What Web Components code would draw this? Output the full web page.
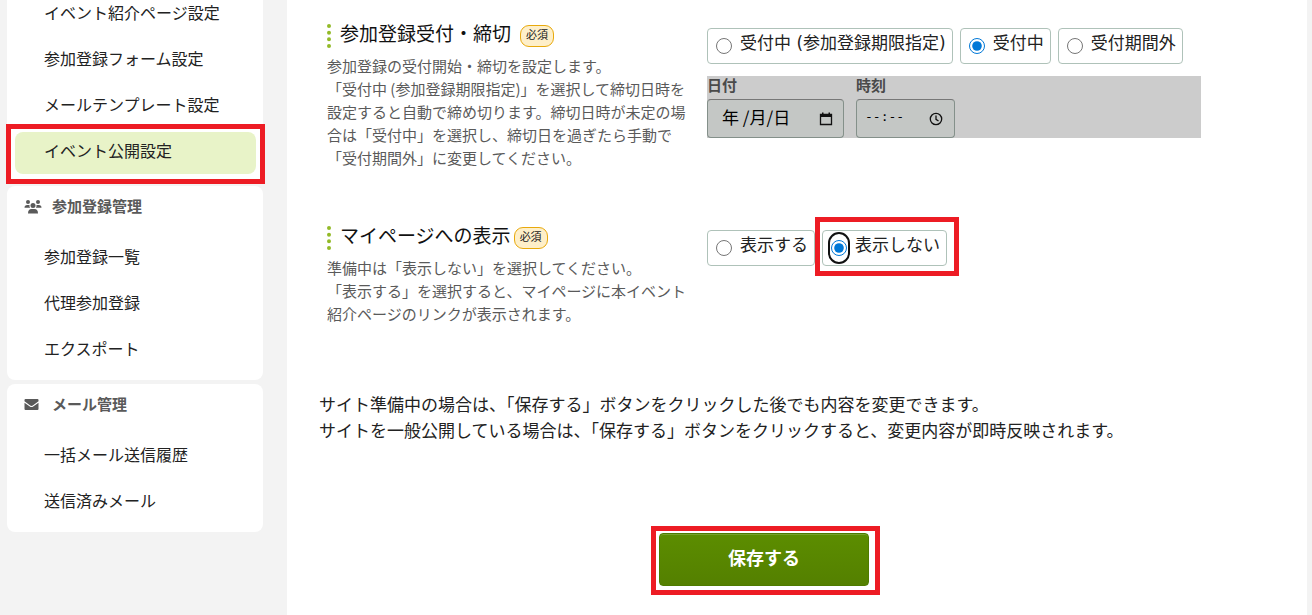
<!DOCTYPE html>
<html lang="ja">
<head>
<meta charset="utf-8">
<meta name="viewport" content="width=device-width, initial-scale=1">
<title>イベント公開設定</title>
<style>
body { margin: 0; background: #f3f3f3; color: #222; font-family: "Noto Sans CJK JP", sans-serif; font-size: 17px; }
</style>
</head>
<body>
<app-shell>
  <nav-card slot="nav" continued>
    <nav-item>イベント紹介ページ設定</nav-item>
    <nav-item>参加登録フォーム設定</nav-item>
    <nav-item>メールテンプレート設定</nav-item>
    <nav-item active>イベント公開設定</nav-item>
  </nav-card>
  <nav-card slot="nav" heading="参加登録管理">
    <svg slot="icon" width="18" height="16" viewBox="0 0 18 16" fill="#5a5a5a" aria-hidden="true">
      <circle cx="4" cy="3" r="2"/><circle cx="14" cy="3" r="2"/><circle cx="9" cy="6.500" r="2.500"/>
      <path d="M.5 8.800Q.5 6 3.200 6H5.500Q5.200 8 6.200 8.800ZM17.500 8.800Q17.500 6 14.800 6H12.500Q12.800 8 11.800 8.800ZM4 14.500Q4 10 7.500 10H10.500Q14 10 14 14.500Z"/>
    </svg>
    <nav-item>参加登録一覧</nav-item>
    <nav-item>代理参加登録</nav-item>
    <nav-item>エクスポート</nav-item>
  </nav-card>
  <nav-card slot="nav" heading="メール管理">
    <svg slot="icon" width="18" height="16" viewBox="0 0 18 16" fill="#5a5a5a" aria-hidden="true">
      <path d="M1.500 2H13.500Q14.500 2 14.500 3V4.300L8.800 8.500Q7.500 9.300 6.200 8.500L.5 4.300V3Q.5 2 1.500 2ZM.5 5.700L5.800 9.500Q7.500 10.600 9.200 9.500L14.500 5.700V12Q14.500 13 13.500 13H1.500Q.5 13 .5 12Z"/>
    </svg>
    <nav-item>一括メール送信履歴</nav-item>
    <nav-item>送信済みメール</nav-item>
  </nav-card>

  <setting-row>
    <span slot="title">参加登録受付・締切&nbsp;</span>
    <span slot="help">参加登録の受付開始・締切を設定します。<br>「受付中 (参加登録期限指定)」を選択して締切日時を<br>設定すると自動で締め切ります。締切日時が未定の場<br>合は「受付中」を選択し、締切日を過ぎたら手動で<br>「受付期間外」に変更してください。</span>
    <radio-group name="reception" label="参加登録受付・締切" options="受付中 (参加登録期限指定)|受付中|受付期間外" selected="1"></radio-group>
    <deadline-fields></deadline-fields>
  </setting-row>
  <setting-row>
    <span slot="title">マイページへの表示</span>
    <span slot="help">準備中は「表示しない」を選択してください。<br>「表示する」を選択すると、マイページに本イベント<br>紹介ページのリンクが表示されます。</span>
    <radio-group name="visible" label="マイページへの表示" options="表示する|表示しない" selected="1" marked></radio-group>
  </setting-row>
  <save-panel>サイト準備中の場合は、「保存する」ボタンをクリックした後でも内容を変更できます。<br>サイトを一般公開している場合は、「保存する」ボタンをクリックすると、変更内容が即時反映されます。</save-panel>
</app-shell>

<script>
class Base extends HTMLElement {
  connectedCallback() {
    if (this.shadowRoot) return;
    this.attachShadow({ mode: 'open' }).innerHTML = this.render();
  }
}

customElements.define('app-shell', class extends Base {
  render() {
    return `<style>
      :host { display: grid; grid-template-columns: 256px minmax(0, 1fr); column-gap: 24px; min-height: 100vh; padding: 0 5px 0 7px; box-sizing: border-box; }
      nav { display: flex; flex-direction: column; gap: 4px; }
      main { background: #fff; padding: 24px 98px 20px 32px; }
    </style>
    <nav aria-label="メニュー"><slot name="nav"></slot></nav><main><slot></slot></main>`;
  }
});

customElements.define('nav-card', class extends Base {
  render() {
    const heading = this.getAttribute('heading');
    return `<style>
      :host { display: block; background: #fff; border-radius: 8px; padding-bottom: 8px; }
      :host([continued]) { border-radius: 0 0 8px 8px; margin-top: -10px; }
      h2 { display: flex; align-items: center; gap: 10px; height: 42px; margin: 0; padding: 0 17px 6px; font-size: 15px; color: #5a5a5a; }
      h2 span { height: 42px; line-height: 40px; }
      ::slotted(svg) { flex: none; }
    </style>
    ${heading ? `<h2><slot name="icon"></slot><span>${heading}</span></h2>` : ''}<slot></slot>`;
  }
});

customElements.define('nav-item', class extends Base {
  render() {
    return `<style>
      :host { display: block; position: relative; padding: 4px 7px 0 8px; }
      a { display: block; position: relative; height: 42px; padding-left: 29px; border-radius: 8px; font-size: 16px; line-height: 36px; color: #222; text-decoration: none; }
      :host([active]) a { background: #e8f3c8; }
      :host([active]) a::after { content: ""; position: absolute; z-index: 1; inset: -8px -9px -10px; border: 5px solid #ed1c24; }
    </style>
    <a href="#"><slot></slot></a>`;
  }
});

customElements.define('setting-row', class extends Base {
  render() {
    return `<style>
      :host { display: grid; grid-template-columns: 380px minmax(0, 1fr); padding: 0 8px; margin-bottom: 57px; }
      h3 { margin: 0 0 6px; height: 24px; padding-left: 9px; border-left: 4px dotted #93ba28; font-family: "DejaVu Sans", "Noto Sans CJK JP", sans-serif; font-size: 19px; font-weight: 400; line-height: 20px; color: #111; white-space: nowrap; }
      .badge { display: inline-block; box-sizing: border-box; height: 22px; margin-left: 3px; padding: 0 5px; border: 1px solid #e8a90c; border-radius: 9px; background: #feefc9; font-size: 11px; line-height: 19px; color: #222; vertical-align: top; margin-top: 1px; }
      p { margin: 0; font-size: 15px; line-height: 23px; color: #5a5a5a; white-space: nowrap; }
      .fields { padding-top: 4px; }
    </style>
    <div><h3><slot name="title"></slot><span class="badge">必須</span></h3><p><slot name="help"></slot></p></div>
    <div class="fields"><slot></slot></div>`;
  }
});

customElements.define('radio-group', class extends Base {
  render() {
    const name = this.getAttribute('name');
    const selected = Number(this.getAttribute('selected'));
    const options = this.getAttribute('options').split('|').map((text, i) =>
      `<label class="${i === selected ? 'on' : ''}"><span class="dot"><input type="radio" name="${name}"${i === selected ? ' checked' : ''}></span><span class="text">${text}</span></label>`).join('');
    return `<style>
      :host { display: block; }
      .group { display: flex; gap: 7px; }
      label { display: flex; align-items: center; gap: 8px; position: relative; box-sizing: border-box; height: 36px; padding: 0 6px 0 8px; border: 1px solid #afc2b9; border-radius: 4px; white-space: nowrap; }
      .dot { position: relative; display: flex; }
      input { width: 16px; height: 16px; margin: 0; accent-color: #0078d7; }
      .text { height: 34px; font-family: "DejaVu Sans", "Noto Sans CJK JP", sans-serif; line-height: 28px; }
      :host([marked]) .on .dot::after { content: ""; position: absolute; inset: -8px -3px; border: 2px solid #111; border-radius: 11px; }
      :host([marked]) .on::after { content: ""; position: absolute; inset: -14px -13px -11px -8px; border: 5px solid #ed1c24; }
    </style>
    <div class="group" role="radiogroup" aria-label="${this.getAttribute('label')}">${options}</div>`;
  }
});

customElements.define('deadline-fields', class extends Base {
  render() {
    return `<style>
      :host { display: flex; gap: 12px; margin-top: 12px; background: #ccc; }
      .field { display: flex; flex-direction: column; box-sizing: border-box; width: 137px; }
      .time { width: 99px; }
      label { height: 23px; font-size: 15px; font-weight: 700; line-height: 18px; color: #4a4a4a; }
      .box { display: flex; align-items: center; box-sizing: border-box; height: 39px; padding: 0 10px 0 14px; border: 1px solid #84908a; border-top-color: #777; border-radius: 4px; background: #c4c7c5; }
      .time .box { padding: 0 11px 0 8px; }
      input { box-sizing: border-box; flex: 1; min-width: 0; height: 36px; padding: 0 0 4px; border: 0; background: none; font: 17px "Noto Sans CJK JP", sans-serif; color: #000; }
      .time input { font: 13px "DejaVu Sans Mono", monospace; }
      svg { flex: none; }
    </style>
    <div class="field"><label for="d">日付</label><div class="box"><input id="d" value="年 /月/日" readonly>
      <svg width="14" height="14" viewBox="0 0 14 14" aria-hidden="true"><path d="M1.500 2.500H12.500V12.500H1.500Z" fill="none" stroke="#111" stroke-width="1.300"/><path d="M1 2H13V5H1ZM3 .5H4.500V2H3ZM9.500.5H11V2H9.500Z" fill="#111"/></svg></div></div>
    <div class="field time"><label for="t">時刻</label><div class="box"><input id="t" value="--:--" readonly>
      <svg width="14" height="14" viewBox="0 0 14 14" fill="none" stroke="#111" stroke-width="1.300" aria-hidden="true"><circle cx="7" cy="7" r="5.700"/><path d="M7 3.500V7.300L9.500 9"/></svg></div></div>`;
  }
});

customElements.define('save-panel', class extends Base {
  render() {
    return `<style>
      :host { display: block; margin-top: 66px; }
      p { margin: 0 0 90px; line-height: 26px; white-space: nowrap; }
      .action { display: flex; justify-content: center; }
      .mark { position: relative; }
      .mark::after { content: ""; position: absolute; inset: -7px -11px -9px -8px; border: 5px solid #ed1c24; pointer-events: none; }
      button { display: block; width: 210px; height: 53px; padding: 0 0 6px; border: 1px solid #4e7b00; border-radius: 4px; background: linear-gradient(#5c8d00, #548000); box-shadow: inset 0 1px #78a22c; color: #fff; font: 700 18px/26px "Noto Sans CJK JP", sans-serif; }
    </style>
    <p><slot></slot></p>
    <div class="action"><div class="mark"><button type="button">保存する</button></div></div>`;
  }
});
</script>
</body>
</html>
